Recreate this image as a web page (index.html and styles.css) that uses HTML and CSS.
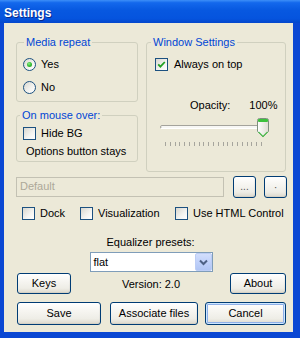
FILE: index.html
```html
<!DOCTYPE html>
<html>
<head>
<meta charset="utf-8">
<link rel="stylesheet" href="styles.css">
</head>
<body>
<div class="window">
  <div class="titlebar">Settings</div>
  <div class="frame">
    <div class="client">
      <div class="top">
        <div class="leftcol">
          <fieldset class="group g-media">
            <legend>Media repeat</legend>
            <div class="gbody">
              <div class="row"><span class="radio checked"></span>Yes</div>
              <div class="row row-gap"><span class="radio"></span>No</div>
            </div>
          </fieldset>
          <fieldset class="group g-mouse">
            <legend>On mouse over:</legend>
            <div class="gbody">
              <div class="row"><span class="check"></span>Hide BG</div>
              <div class="row note">Options button stays</div>
            </div>
          </fieldset>
        </div>
        <fieldset class="group g-window">
          <legend>Window Settings</legend>
          <div class="gbody">
            <div class="row row-wide"><span class="check"><svg width="11" height="11" viewBox="0 0 11 11"><path d="M2.2 5.3l2.2 2.3 4.4-4.6" fill="none" stroke="#21a121" stroke-width="1.8"/></svg></span>Always on top</div>
            <div class="opacity"><span>Opacity:</span><span class="pct">100%</span></div>
            <svg class="slider" width="124" height="30" viewBox="0 0 124 30">
              <defs>
                <linearGradient id="thumb" x1="0" y1="0" x2="1" y2="0">
                  <stop offset="0" stop-color="#ffffff"/>
                  <stop offset="1" stop-color="#dedcd2"/>
                </linearGradient>
              </defs>
              <rect x="8.5" y="8.5" width="106" height="3" rx="1.5" fill="#f7f7f4" stroke="#a4a39c"/>
              <path d="M9 11.5h105" stroke="#ffffff" stroke-width="1"/>
              <path d="M13.5 25v4M18.5 25v4M23.5 25v4M27.5 25v4M32.5 25v4M37.5 25v4M42.5 25v4M47.5 25v4M51.5 25v4M56.5 25v4M61.5 25v4M66.5 25v4M71.5 25v4M75.5 25v4M80.5 25v4M85.5 25v4M90.5 25v4M95.5 25v4M99.5 25v4M104.5 25v4M109.5 25v4" stroke="#a6a59d" stroke-width="1"/>
              <path d="M105.5 3.5a2 2 0 0 1 2-2h7a2 2 0 0 1 2 2v11l-5.5 5.5-5.5-5.5z" fill="url(#thumb)" stroke="#7f8f7f"/>
              <rect x="106" y="2" width="10" height="3" rx="1" fill="#3cc13c"/>
              <path d="M106.5 14.8l4.5 4.5 4.5-4.5" fill="none" stroke="#4fc24f" stroke-width="1.2"/>
            </svg>
          </div>
        </fieldset>
      </div>

      <div class="pathrow">
        <div class="field">Default</div>
        <button class="btn sq dots">...</button>
        <button class="btn sq dot">·</button>
      </div>

      <div class="checks">
        <div class="row"><span class="check"></span>Dock</div>
        <div class="row"><span class="check"></span>Visualization</div>
        <div class="row"><span class="check"></span>Use HTML Control</div>
      </div>

      <div class="eq">
        <div class="eq-label">Equalizer presets:</div>
        <div class="select"><span class="sel-text">flat</span><span class="arrow"><svg width="9" height="7" viewBox="0 0 9 7"><path d="M1 1.5l3.5 3.5 3.5-3.5" fill="none" stroke="#4d6185" stroke-width="2"/></svg></span></div>
        <button class="btn keys">Keys</button>
        <div class="version">Version: 2.0</div>
        <button class="btn about">About</button>
      </div>

      <div class="actions">
        <button class="btn save">Save</button>
        <button class="btn assoc">Associate files</button>
        <button class="btn cancel">Cancel</button>
      </div>
    </div>
  </div>
</div>
</body>
</html>
```

FILE: styles.css
```css
* { box-sizing: border-box; }
html, body { margin: 0; padding: 0; background: #ffffff; }
body {
  width: 300px;
  height: 343px;
  overflow: hidden;
  font: 11px/13px "Liberation Sans", Arial, sans-serif;
  color: #000;
}
.window {
  width: 300px;
  height: 338px;
  display: flex;
  flex-direction: column;
}
.titlebar {
  height: 23px;
  padding: 4px 0 0 4px;
  line-height: 19px;
  font-weight: bold;
  font-size: 12px;
  color: #fff;
  text-shadow: 1px 1px 0 #0a2a8a;
  background: linear-gradient(180deg, #3d8ff8 0%, #1368ec 12%, #0758e0 45%, #0554de 80%, #0347cc 100%);
}
.frame {
  flex: 1;
  border-style: solid;
  border-color: #0a47d3;
  border-width: 0 7px 6px 4px;
  display: flex;
}
.client {
  flex: 1;
  background: #ece9d8;
  padding-top: 13px;
}
.top {
  display: grid;
  grid-template-columns: 122px 140px;
  column-gap: 8px;
  margin-left: 12px;
  align-items: start;
}
.leftcol { display: flex; flex-direction: column; gap: 7px; }
.group {
  margin: 0;
  padding: 0;
  min-width: 0;
  border: 1px solid #d0d0bf;
  border-radius: 3px;
}
.group legend {
  color: #0046d5;
  padding: 0 2px;
  line-height: 13px;
}
.g-media legend { margin-left: 7px; }
.g-mouse legend { margin-left: 3px; }
.g-window legend { margin-left: 4px; }
.g-media .gbody { padding: 7px 0 6px 6px; }
.g-mouse .gbody { padding: 3px 0 2px 6px; }
.g-window .gbody { padding: 7px 0 24px 8px; }

.row {
  display: flex;
  align-items: center;
  height: 16px;
  gap: 5px;
  white-space: nowrap;
}
.row-gap { margin-top: 7px; }
.row-wide { gap: 6px; }
.note { padding-left: 3px; margin-top: 2px; }

.radio {
  width: 13px;
  height: 13px;
  border-radius: 50%;
  border: 1px solid #1c5180;
  background: linear-gradient(135deg, #d8d7cf 0%, #f4f4f1 60%, #ffffff 100%);
  position: relative;
  flex: none;
}
.radio.checked::after {
  content: "";
  position: absolute;
  left: 3px;
  top: 3px;
  width: 5px;
  height: 5px;
  border-radius: 50%;
  background: radial-gradient(circle at 40% 35%, #8ef08a 0%, #3cc03a 45%, #1d9a1d 100%);
}
.check {
  width: 13px;
  height: 13px;
  border: 1px solid #1c5180;
  background: linear-gradient(135deg, #d8d7cf 0%, #f4f4f1 60%, #ffffff 100%);
  flex: none;
  display: flex;
}
.check svg { display: block; }

.opacity {
  display: flex;
  margin-top: 25px;
  padding-left: 35px;
  height: 16px;
  align-items: center;
}
.pct { margin-left: 19px; }
.slider { display: block; margin: 4px 0 0 -3px; }

.pathrow {
  display: flex;
  align-items: center;
  height: 22px;
  margin: 4px 0 0 12px;
}
.field {
  width: 208px;
  height: 20px;
  border: 1px solid #c3c1b3;
  background: #ece9d8;
  color: #aca899;
  padding: 2px 0 0 3px;
}
.btn {
  font: inherit;
  color: #000;
  padding: 0;
  border: 1px solid #003c74;
  border-radius: 3px;
  background: linear-gradient(180deg, #ffffff 0%, #f7f6f2 35%, #eeede6 75%, #dcd8cc 100%);
  box-shadow: inset -1px -1px 0 rgba(0, 0, 0, 0.04);
}
.sq { width: 23px; height: 22px; color: #555; }
.dots { margin-left: 9px; font-size: 10px; line-height: 10px; }
.dot { margin-left: 8px; }

.checks {
  display: grid;
  grid-template-columns: 58px 95px auto;
  margin: 7px 0 0 18px;
}

.eq {
  display: grid;
  grid-template-columns: 54px 1fr 56px;
  margin: 15px 7px 0 13px;
  align-items: center;
}
.eq-label { grid-column: 2; grid-row: 1; justify-self: center; line-height: 13px; }
.select {
  grid-column: 2;
  grid-row: 2;
  justify-self: center;
  margin: 3px 0 0 1px;
  width: 123px;
  height: 20px;
  border: 1px solid #7f9db9;
  background: #fff;
  display: flex;
  align-items: center;
  justify-content: space-between;
}
.sel-text { padding-left: 3px; }
.arrow {
  width: 17px;
  height: 18px;
  border-radius: 2px;
  border: 1px solid #bccdf5;
  background: linear-gradient(180deg, #d2defd 0%, #bdcff9 60%, #b0c5f4 100%);
  display: flex;
  align-items: center;
  justify-content: center;
}
.arrow svg { display: block; }
.keys { grid-column: 1; grid-row: 3; height: 21px; margin-top: 1px; }
.version { grid-column: 2; grid-row: 3; justify-self: center; margin: 2px 0 0 1px; }
.about { grid-column: 3; grid-row: 3; height: 21px; margin-top: 1px; }

.actions {
  display: flex;
  margin: 8px 0 0 13px;
  height: 23px;
}
.actions .btn { height: 23px; }
.save { width: 84px; }
.assoc { width: 88px; margin-left: 9px; }
.cancel {
  width: 81px;
  margin-left: 7px;
  box-shadow: inset 0 0 0 1px #cee7ff, inset 0 0 0 2px #8fb0e8;
}
```
